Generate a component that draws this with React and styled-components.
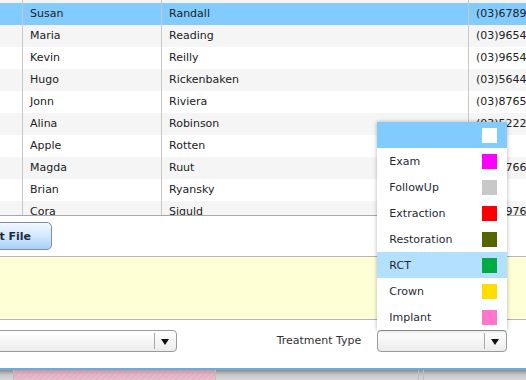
import React from "react";
import styled, { createGlobalStyle } from "styled-components";

const GlobalStyle = createGlobalStyle`
  html, body {
    margin: 0;
    padding: 0;
    width: 526px;
    height: 380px;
    overflow: hidden;
    background: #fff;
  }
  body {
    font-family: "DejaVu Sans", Verdana, sans-serif;
    font-size: 11px;
    color: #222;
  }
`;

const PATIENTS = [
  { first: "Lena", last: "Quinn", phone: "(03)91234567" },
  { first: "Susan", last: "Randall", phone: "(03)67891234", selected: true },
  { first: "Maria", last: "Reading", phone: "(03)96541234" },
  { first: "Kevin", last: "Reilly", phone: "(03)96548765" },
  { first: "Hugo", last: "Rickenbaken", phone: "(03)56441234" },
  { first: "Jonn", last: "Riviera", phone: "(03)87651234" },
  { first: "Alina", last: "Robinson", phone: "(03)52223456" },
  { first: "Apple", last: "Rotten", phone: "" },
  { first: "Magda", last: "Ruut", phone: "(03)97661234" },
  { first: "Brian", last: "Ryansky", phone: "" },
  { first: "Cora", last: "Siguld", phone: "(03)89761234" }
];

const TREATMENTS = [
  { name: "", color: "#ffffff", active: true },
  { name: "Exam", color: "#ff00ff" },
  { name: "FollowUp", color: "#c8c8c8" },
  { name: "Extraction", color: "#ff0000" },
  { name: "Restoration", color: "#556600" },
  { name: "RCT", color: "#00aa44", hover: true },
  { name: "Crown", color: "#ffdd00" },
  { name: "Implant", color: "#ff77cc" }
];

export default function App() {
  return (
    <>
      <GlobalStyle />
      <Window>
        <Table>
          <TableBody>
            {PATIENTS.map((p, i) => (
              <Row key={p.first} selected={p.selected} odd={i % 2 === 1}>
                <Cell />
                <Cell>{p.first}</Cell>
                <Cell>{p.last}</Cell>
                <Cell last>{p.phone}</Cell>
              </Row>
            ))}
          </TableBody>
        </Table>

        <Toolbar>
          <Button>Import File</Button>
        </Toolbar>

        <Notes />

        <FilterBar>
          <FieldLabel>Dentist</FieldLabel>
          <Select width={185}>
            <Arrow />
          </Select>
          <Spacer />
          <FieldLabel gap={16}>Treatment Type</FieldLabel>
          <SelectWrap>
            <Menu>
              {TREATMENTS.map(t => (
                <MenuItem key={t.name || "none"} active={t.active} hover={t.hover}>
                  <span>{t.name}</span>
                  <Swatch style={{ background: t.color }} />
                </MenuItem>
              ))}
            </Menu>
            <Select width={130}>
              <Arrow />
            </Select>
          </SelectWrap>
        </FilterBar>

        <Taskbar>
          <TaskCell w={13} />
          <TaskCell w={202} pink />
          <TaskCell w={203} />
          <TaskCell w={4} />
          <TaskCell w={170} />
        </Taskbar>
      </Window>
    </>
  );
}

const Window = styled.div`
  width: 660px;
  margin-left: -66px;
  display: flex;
  flex-direction: column;
`;

const Table = styled.div`
  height: 215px;
  overflow: hidden;
  border-bottom: 1px solid #a8a8a8;
`;

const TableBody = styled.div`
  margin-top: -19px;
`;

const Row = styled.div`
  display: grid;
  grid-template-columns: 89px 139px 307px 1fr;
  height: 22px;
  background: ${p => (p.selected ? "#81cbff" : p.odd ? "#ffffff" : "#f5f5f5")};
`;

const Cell = styled.div`
  box-sizing: border-box;
  padding: 0 7px;
  line-height: 22px;
  white-space: nowrap;
  overflow: ${p => (p.last ? "visible" : "hidden")};
  border-right: ${p => (p.last ? "none" : "1px solid #c8c8c8")};
`;

const Toolbar = styled.div`
  display: flex;
  align-items: center;
  height: 40px;
  padding: 0 8px;
`;

const Button = styled.button`
  height: 28px;
  padding: 0 20px;
  font-family: "DejaVu Sans", Verdana, sans-serif;
  font-size: 11px;
  font-weight: bold;
  color: #1e2a3a;
  border: 1px solid #7f8ea3;
  border-radius: 5px;
  background: linear-gradient(#f2f8ff, #d3e8ff 50%, #a6d0fa);
`;

const Notes = styled.div`
  height: 62px;
  background: #ffffd6;
  border-top: 1px solid #b4b4b4;
  border-bottom: 1px solid #b4b4b4;
`;

const FilterBar = styled.div`
  display: flex;
  align-items: flex-start;
  height: 48px;
  padding: 10px 0 0 8px;
  box-sizing: border-box;
`;

const FieldLabel = styled.div`
  line-height: 22px;
  color: #333;
  margin-right: ${p => p.gap || 10}px;
  white-space: nowrap;
`;

const Spacer = styled.div`
  width: 100px;
`;

const SelectWrap = styled.div`
  position: relative;
`;

const Select = styled.div`
  box-sizing: border-box;
  width: ${p => p.width}px;
  height: 22px;
  border: 1px solid #9a9a9a;
  border-radius: 4px;
  background: linear-gradient(#ffffff, #ececec);
  display: flex;
  justify-content: flex-end;
`;

const Arrow = styled.div`
  width: 21px;
  border-left: 1px solid #a8a8a8;
  margin: 2px 0;
  position: relative;
  &::after {
    content: "";
    position: absolute;
    left: 6px;
    top: 6px;
    border-left: 4px solid transparent;
    border-right: 4px solid transparent;
    border-top: 6px solid #111;
  }
`;

const Menu = styled.div`
  position: absolute;
  left: 0;
  bottom: 100%;
  width: 130px;
  background: #fff;
  box-shadow: 0 0 4px rgba(0, 0, 0, 0.3);
  z-index: 2;
`;

const MenuItem = styled.div`
  height: 26px;
  display: flex;
  align-items: center;
  justify-content: space-between;
  padding: 0 10px 0 12px;
  color: #1f2a36;
  background: ${p => (p.active ? "#81cbff" : p.hover ? "#b4e0ff" : "#fff")};
`;

const Swatch = styled.div`
  width: 15px;
  height: 15px;
`;

const Taskbar = styled.div`
  display: flex;
  height: 12px;
  margin-left: 66px;
  border-top: 2px solid #6fa9d8;
  background: linear-gradient(#8c8c8c, #c8c8c8 40%, #dcdcdc);
`;

const TaskCell = styled.div`
  width: ${p => p.w}px;
  border-right: 1px solid #bdbdbd;
  background: ${p =>
    p.pink
      ? "repeating-linear-gradient(135deg, rgba(255,150,190,0.55) 0 2px, rgba(240,170,200,0.45) 2px 4px)"
      : "transparent"};
`;
